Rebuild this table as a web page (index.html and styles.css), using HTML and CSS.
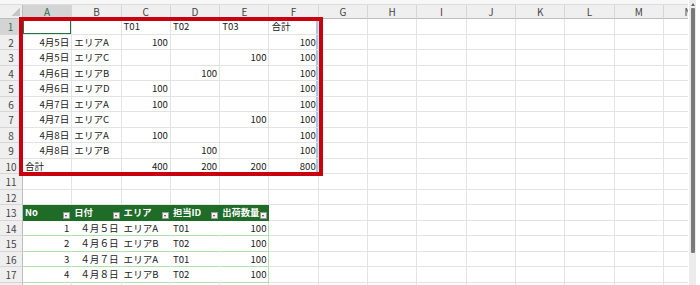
FILE: index.html
```html
<!DOCTYPE html>
<html lang="ja">
<head>
<meta charset="utf-8">
<title>Sheet</title>
<link rel="stylesheet" href="styles.css">
</head>
<body>
<div class="sheet">
  <div class="topband"></div>
  <div class="grid">
    <div class="h corner"></div><div class="h sel">A</div><div class="h">B</div><div class="h">C</div><div class="h">D</div><div class="h">E</div><div class="h">F</div><div class="h">G</div><div class="h">H</div><div class="h">I</div><div class="h">J</div><div class="h">K</div><div class="h">L</div><div class="h">M</div><div class="h">N</div>

    <div class="rh sel">1</div><div class="c a1"></div><div class="c"></div><div class="c">T01</div><div class="c">T02</div><div class="c">T03</div><div class="c bl">合計</div><div class="c"></div><div class="c"></div><div class="c"></div><div class="c"></div><div class="c"></div><div class="c"></div><div class="c"></div><div class="c"></div>

    <div class="rh">2</div><div class="c r">4月5日</div><div class="c">エリアA</div><div class="c r">100</div><div class="c"></div><div class="c"></div><div class="c r bl">100</div><div class="c"></div><div class="c"></div><div class="c"></div><div class="c"></div><div class="c"></div><div class="c"></div><div class="c"></div><div class="c"></div>

    <div class="rh">3</div><div class="c r">4月5日</div><div class="c">エリアC</div><div class="c"></div><div class="c"></div><div class="c r">100</div><div class="c r bl">100</div><div class="c"></div><div class="c"></div><div class="c"></div><div class="c"></div><div class="c"></div><div class="c"></div><div class="c"></div><div class="c"></div>

    <div class="rh">4</div><div class="c r">4月6日</div><div class="c">エリアB</div><div class="c"></div><div class="c r">100</div><div class="c"></div><div class="c r bl">100</div><div class="c"></div><div class="c"></div><div class="c"></div><div class="c"></div><div class="c"></div><div class="c"></div><div class="c"></div><div class="c"></div>

    <div class="rh">5</div><div class="c r">4月6日</div><div class="c">エリアD</div><div class="c r">100</div><div class="c"></div><div class="c"></div><div class="c r bl">100</div><div class="c"></div><div class="c"></div><div class="c"></div><div class="c"></div><div class="c"></div><div class="c"></div><div class="c"></div><div class="c"></div>

    <div class="rh">6</div><div class="c r">4月7日</div><div class="c">エリアA</div><div class="c r">100</div><div class="c"></div><div class="c"></div><div class="c r bl">100</div><div class="c"></div><div class="c"></div><div class="c"></div><div class="c"></div><div class="c"></div><div class="c"></div><div class="c"></div><div class="c"></div>

    <div class="rh">7</div><div class="c r">4月7日</div><div class="c">エリアC</div><div class="c"></div><div class="c"></div><div class="c r">100</div><div class="c r bl">100</div><div class="c"></div><div class="c"></div><div class="c"></div><div class="c"></div><div class="c"></div><div class="c"></div><div class="c"></div><div class="c"></div>

    <div class="rh">8</div><div class="c r">4月8日</div><div class="c">エリアA</div><div class="c r">100</div><div class="c"></div><div class="c"></div><div class="c r bl">100</div><div class="c"></div><div class="c"></div><div class="c"></div><div class="c"></div><div class="c"></div><div class="c"></div><div class="c"></div><div class="c"></div>

    <div class="rh">9</div><div class="c r">4月8日</div><div class="c">エリアB</div><div class="c"></div><div class="c r">100</div><div class="c"></div><div class="c r bl">100</div><div class="c"></div><div class="c"></div><div class="c"></div><div class="c"></div><div class="c"></div><div class="c"></div><div class="c"></div><div class="c"></div>

    <div class="rh">10</div><div class="c">合計</div><div class="c"></div><div class="c r">400</div><div class="c r">200</div><div class="c r">200</div><div class="c r bl">800</div><div class="c"></div><div class="c"></div><div class="c"></div><div class="c"></div><div class="c"></div><div class="c"></div><div class="c"></div><div class="c"></div>

    <div class="rh">11</div><div class="c"></div><div class="c"></div><div class="c"></div><div class="c"></div><div class="c"></div><div class="c"></div><div class="c"></div><div class="c"></div><div class="c"></div><div class="c"></div><div class="c"></div><div class="c"></div><div class="c"></div><div class="c"></div>

    <div class="rh">12</div><div class="c"></div><div class="c"></div><div class="c"></div><div class="c"></div><div class="c"></div><div class="c"></div><div class="c"></div><div class="c"></div><div class="c"></div><div class="c"></div><div class="c"></div><div class="c"></div><div class="c"></div><div class="c"></div>

    <div class="rh">13</div><div class="c th">No<span class="fb"></span></div><div class="c th">日付<span class="fb"></span></div><div class="c th">エリア<span class="fb"></span></div><div class="c th">担当ID<span class="fb"></span></div><div class="c th">出荷数量<span class="fb"></span></div><div class="c"></div><div class="c"></div><div class="c"></div><div class="c"></div><div class="c"></div><div class="c"></div><div class="c"></div><div class="c"></div><div class="c"></div>

    <div class="rh">14</div><div class="c t r">1</div><div class="c t r">４月５日</div><div class="c t">エリアA</div><div class="c t">T01</div><div class="c t e r">100</div><div class="c"></div><div class="c"></div><div class="c"></div><div class="c"></div><div class="c"></div><div class="c"></div><div class="c"></div><div class="c"></div><div class="c"></div>

    <div class="rh">15</div><div class="c t r">2</div><div class="c t r">４月６日</div><div class="c t">エリアB</div><div class="c t">T02</div><div class="c t e r">100</div><div class="c"></div><div class="c"></div><div class="c"></div><div class="c"></div><div class="c"></div><div class="c"></div><div class="c"></div><div class="c"></div><div class="c"></div>

    <div class="rh">16</div><div class="c t r">3</div><div class="c t r">４月７日</div><div class="c t">エリアA</div><div class="c t">T01</div><div class="c t e r">100</div><div class="c"></div><div class="c"></div><div class="c"></div><div class="c"></div><div class="c"></div><div class="c"></div><div class="c"></div><div class="c"></div><div class="c"></div>

    <div class="rh">17</div><div class="c t r">4</div><div class="c t r">４月８日</div><div class="c t">エリアB</div><div class="c t">T02</div><div class="c t e r">100</div><div class="c"></div><div class="c"></div><div class="c"></div><div class="c"></div><div class="c"></div><div class="c"></div><div class="c"></div><div class="c"></div><div class="c"></div>

    <div class="rh">18</div><div class="c"></div><div class="c"></div><div class="c"></div><div class="c"></div><div class="c"></div><div class="c"></div><div class="c"></div><div class="c"></div><div class="c"></div><div class="c"></div><div class="c"></div><div class="c"></div><div class="c"></div><div class="c"></div>
  </div>
  <div class="redbox"></div>
</div>
<div class="vscroll">
  <div class="track">
    <span class="arrow"></span>
    <span class="thumb"></span>
  </div>
</div>
</body>
</html>
```

FILE: styles.css
```css
* {
  box-sizing: border-box;
  margin: 0;
  padding: 0;
}

body {
  width: 700px;
  height: 285px;
  overflow: hidden;
  background: #fff;
  display: flex;
  font-family: "Noto Sans CJK JP", "Noto Sans", sans-serif;
  font-size: 9.6px;
  color: #222;
}

.sheet {
  position: relative;
  width: 688px;
  height: 285px;
  overflow: hidden;
  display: flex;
  flex-direction: column;
  flex: none;
}

.topband {
  height: 5px;
  flex: none;
  background: #f7f7f7;
  border-bottom: 1px solid #dcdcdc;
}

.grid {
  display: grid;
  grid-template-columns: 23px repeat(14, 49.3px);
  grid-template-rows: 14px repeat(18, 15.5px);
}

.h {
  background: #efefef;
  border-right: 1px solid #d6d6d6;
  border-bottom: 1px solid #bdbdbd;
  text-align: center;
  line-height: 13px;
  color: #444;
  font-size: 10px;
  white-space: nowrap;
  overflow: hidden;
}

.h.sel {
  background: #d4d4d4;
  color: #217346;
  border-bottom: 2px solid #217346;
}

.corner {
  position: relative;
  border-right-color: #bdbdbd;
}

.corner::after {
  content: "";
  position: absolute;
  right: 2px;
  bottom: 2px;
  width: 9px;
  height: 9px;
  background: linear-gradient(135deg, transparent 50%, #c6c6c6 50%);
}

.rh {
  background: #efefef;
  border-right: 1px solid #bdbdbd;
  border-bottom: 1px solid #d6d6d6;
  text-align: center;
  line-height: 15px;
  color: #444;
  font-size: 10px;
  overflow: hidden;
}

.rh.sel {
  background: #d4d4d4;
  color: #217346;
  border-right: 2px solid #217346;
}

.c {
  position: relative;
  border-right: 1px solid #e3e3e3;
  border-bottom: 1px solid #e3e3e3;
  padding: 0 2px;
  line-height: 15px;
  white-space: nowrap;
  overflow: hidden;
}

.r {
  text-align: right;
}

.a1 {
  box-shadow: inset 0 0 0 1px #217346;
}

.bl {
  box-shadow: inset -2px 0 0 #a9c6e8;
}

.th {
  background: #1e6c28;
  color: #fff;
  font-weight: bold;
  font-size: 9.3px;
  border-right-color: #1e6c28;
  border-bottom-color: #1e6c28;
}

.fb {
  position: absolute;
  right: 1px;
  bottom: 1px;
  width: 7px;
  height: 7px;
  background: #f3f3f3;
  border: 1px solid #9a9a9a;
}

.fb::after {
  content: "";
  position: absolute;
  left: 1px;
  top: 2px;
  border-left: 1.5px solid transparent;
  border-right: 1.5px solid transparent;
  border-top: 2px solid #444;
}

.t {
  background: #fff;
  border-right-color: #fff;
  border-bottom-color: #b2dfb2;
}

.t.e {
  border-right-color: #b2dfb2;
}

.redbox {
  position: absolute;
  left: 19px;
  top: 17px;
  width: 304px;
  height: 159px;
  border: 4px solid #c8000f;
  pointer-events: none;
}

.vscroll {
  width: 12px;
  height: 285px;
  flex: none;
  padding-left: 1px;
  background: #fff;
}

.track {
  width: 7px;
  height: 100%;
  background: #ececec;
  display: flex;
  flex-direction: column;
  align-items: center;
}

.arrow {
  margin-top: 3px;
  width: 0;
  height: 0;
  border-left: 2px solid transparent;
  border-right: 2px solid transparent;
  border-bottom: 3px solid #666;
}

.thumb {
  margin-top: 2px;
  width: 4px;
  height: 245px;
  background: #7a7a7a;
  border-radius: 1px;
}
```
